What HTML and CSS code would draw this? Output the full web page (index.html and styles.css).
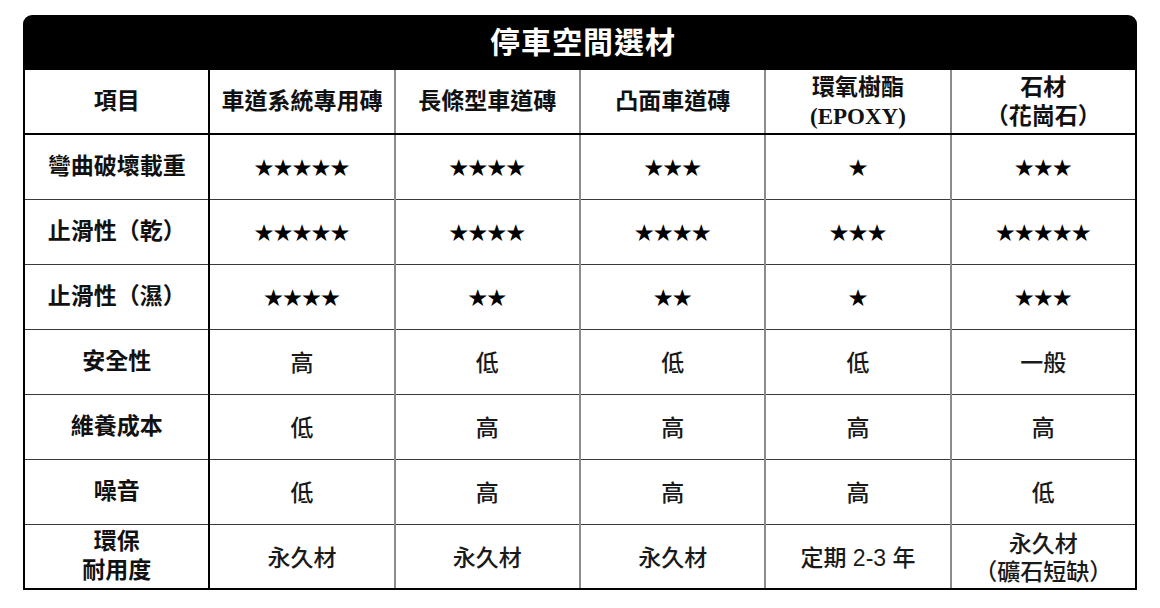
FILE: index.html
```html
<!DOCTYPE html>
<html lang="zh-Hant">
<head>
<meta charset="utf-8">
<link rel="stylesheet" href="styles.css">
</head>
<body>
<div class="sheet">
  <div class="title">停車空間選材</div>
  <table class="grid">
    <colgroup>
      <col><col><col><col><col><col>
    </colgroup>
    <thead>
      <tr class="head">
        <th class="label">項目</th>
        <th>車道系統專用磚</th>
        <th>長條型車道磚</th>
        <th>凸面車道磚</th>
        <th>環氧樹酯<br>(EPOXY)</th>
        <th>石材<br>（花崗石）</th>
      </tr>
    </thead>
    <tbody>
      <tr>
        <th class="label">彎曲破壞載重</th>
        <td class="stars">★★★★★</td>
        <td class="stars">★★★★</td>
        <td class="stars">★★★</td>
        <td class="stars">★</td>
        <td class="stars">★★★</td>
      </tr>
      <tr>
        <th class="label">止滑性（乾）</th>
        <td class="stars">★★★★★</td>
        <td class="stars">★★★★</td>
        <td class="stars">★★★★</td>
        <td class="stars">★★★</td>
        <td class="stars">★★★★★</td>
      </tr>
      <tr>
        <th class="label">止滑性（濕）</th>
        <td class="stars">★★★★</td>
        <td class="stars">★★</td>
        <td class="stars">★★</td>
        <td class="stars">★</td>
        <td class="stars">★★★</td>
      </tr>
      <tr>
        <th class="label">安全性</th>
        <td>高</td>
        <td>低</td>
        <td>低</td>
        <td>低</td>
        <td>一般</td>
      </tr>
      <tr>
        <th class="label">維養成本</th>
        <td>低</td>
        <td>高</td>
        <td>高</td>
        <td>高</td>
        <td>高</td>
      </tr>
      <tr>
        <th class="label">噪音</th>
        <td>低</td>
        <td>高</td>
        <td>高</td>
        <td>高</td>
        <td>低</td>
      </tr>
      <tr class="last">
        <th class="label">環保<br>耐用度</th>
        <td>永久材</td>
        <td>永久材</td>
        <td>永久材</td>
        <td>定期 2-3 年</td>
        <td class="two">永久材<br>（礦石短缺）</td>
      </tr>
    </tbody>
  </table>
</div>
</body>
</html>
```
FILE: styles.css
```css
html, body {
  margin: 0;
  padding: 0;
  background: #ffffff;
}

body {
  font-family: "Noto Sans CJK TC", "Noto Sans", sans-serif;
  color: #111;
}

.sheet {
  width: 1114px;
  margin: 15px 0 0 23px;
}

.title {
  height: 55px;
  background: #000;
  border-radius: 9px 9px 0 0;
  color: #fff;
  font-family: "Liberation Serif", "Noto Sans CJK TC", serif;
  font-weight: 700;
  font-size: 30px;
  line-height: 55px;
  text-align: center;
  letter-spacing: 1px;
  padding-left: 6px;
}

.grid {
  width: 1114px;
  table-layout: fixed;
  border-collapse: collapse;
  border: 2px solid #000;
  border-top: none;
}

.grid th,
.grid td {
  padding: 0;
  text-align: center;
  vertical-align: middle;
  border-left: 2px solid #8c8c8c;
  border-bottom: 1.5px solid #3a3a3a;
}

.grid .label {
  border-left: 2px solid #000;
  border-right: 2px solid #000;
}

.grid th {
  font-family: "Liberation Serif", "Noto Sans CJK TC", serif;
  font-weight: 700;
  font-size: 23px;
  line-height: 29px;
  color: #111;
}

.grid td {
  font-family: "Liberation Sans", "Noto Sans CJK TC", sans-serif;
  font-size: 23px;
  font-weight: 500;
  line-height: 30px;
  padding-top: 3px;
  color: #1a1a1a;
}

.grid td.two {
  line-height: 28px;
}

.grid td.stars {
  font-family: "Noto Sans CJK TC", sans-serif;
  font-size: 19px;
  font-weight: 400;
  padding-top: 0;
  color: #000;
  letter-spacing: 0;
}

.grid .head th {
  height: 63px;
  border-bottom: 2px solid #000;
}

.grid tbody tr {
  height: 65px;
}

.grid tbody tr.last th,
.grid tbody tr.last td {
  border-bottom: 2px solid #000;
}
```
